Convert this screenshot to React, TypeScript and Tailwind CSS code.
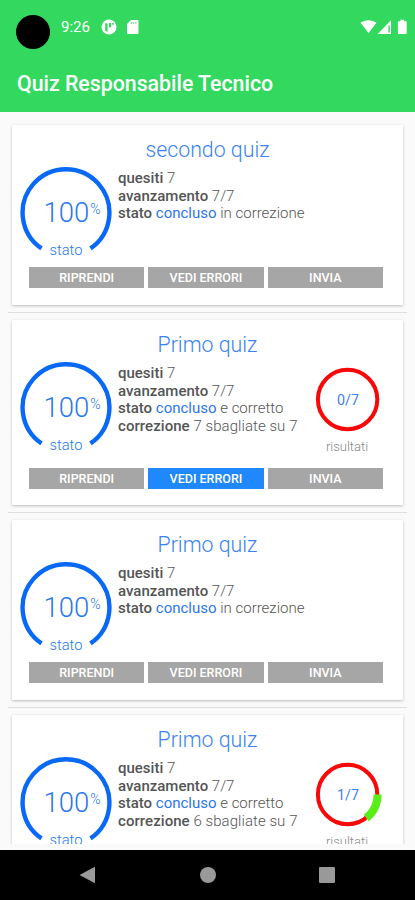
import React from "react";

type Quiz = {
  title: string;
  status: string;
  wrong?: number;
  right?: number;
};

const quizzes: Quiz[] = [
  { title: "secondo quiz", status: "in correzione" },
  { title: "Primo quiz", status: "e corretto", wrong: 7, right: 0 },
  { title: "Primo quiz", status: "in correzione" },
  { title: "Primo quiz", status: "e corretto", wrong: 6, right: 1 },
];

function StatusBar() {
  return (
    <div className="flex h-[56px] items-start pl-4 pr-[7px] pt-[15px] text-white">
      <div className="h-[34px] w-[34px] rounded-full bg-black" />
      <span className="ml-[11px] mt-[2px] text-[15px] leading-[20px]">9:26</span>
      <svg className="ml-[11px] mt-[4px]" width="16" height="16" viewBox="0 0 16 16">
        <circle cx="8" cy="8" r="7.5" fill="#fff" />
        <path d="M4.200 4.200v7.200l2.400 1.600V4.200zM8 4h2.200v4.200H8zM11.200 4h1.600v1.800h-1.600z" fill="#33d95f" />
      </svg>
      <svg className="ml-[9px] mt-[4px]" width="13" height="16" viewBox="0 0 13 16">
        <path d="M5 1h6.200c.8 0 1.300.5 1.300 1.300v11.400c0 .8-.5 1.300-1.300 1.300H2.300C1.500 15 1 14.500 1 13.700V5z" fill="#fff" />
        <path d="M5.400 3v1.800M7.600 3v1.800M9.800 3v1.800" stroke="#33d95f" strokeWidth=".8" />
      </svg>
      <div className="ml-auto mt-[4px] flex">
        <svg width="17" height="16" viewBox="0 0 17 16">
          <path d="M.5 3.800C5 .3 12 .3 16.500 3.800L8.500 14z" fill="#fff" />
        </svg>
        <svg width="15" height="16" viewBox="0 0 15 16">
          <path d="M14 1.200V15H.6zM11.400 6.500v7h1.400v-7z" fill="#fff" fillRule="evenodd" />
        </svg>
        <svg className="ml-[5px]" width="11" height="16" viewBox="0 0 11 16">
          <path d="M3.500.8h3.600v1.500h1.600c.6 0 1 .4 1 1v10.600c0 .6-.4 1-1 1H1.900c-.6 0-1-.4-1-1V3.300c0-.6.4-1 1-1h1.600z" fill="#fff" />
        </svg>
      </div>
    </div>
  );
}

function Gauge() {
  return (
    <svg className="shrink-0" width="92" height="96" viewBox="0 0 92 96">
      <path d="M21.500 83.400A43.400 43.400 0 1 1 70.500 83.400" fill="none" stroke="#0869f6" strokeWidth="4.400" />
      <text x="23.500" y="56.700" fontSize="27.500" fontWeight="300" fill="#2877ee">100</text>
      <text x="70.300" y="48.500" fontSize="14" fontWeight="300" fill="#2877ee">%</text>
      <text x="46" y="89.700" fontSize="14.700" fontWeight="300" textAnchor="middle" fill="#2877ee">stato</text>
    </svg>
  );
}

function Result({ right }: { right: number }) {
  return (
    <div className="ml-auto mr-[21px] flex w-[70px] flex-col items-center pt-[6px]">
      <svg width="70" height="66" viewBox="0 0 70 66">
        <circle cx="35.600" cy="33.500" r="29.700" fill="none" stroke="#f80808" strokeWidth="4" />
        {right > 0 && (
          <path d="M65.600 33.500A30 30 0 0 1 54.300 57" fill="none" stroke="#5aee18" strokeWidth="8" />
        )}
        <text x="36" y="38.500" fontSize="14.300" textAnchor="middle" fill="#3d82ee">{right}/7</text>
      </svg>
      <span className="mt-[6px] text-[13px] font-light leading-[18px] text-[#888]">risultati</span>
    </div>
  );
}

function QuizCard({ quiz }: { quiz: Quiz }) {
  const corrected = quiz.wrong !== undefined;
  return (
    <div
      className={`mx-3 shrink-0 rounded-[1px] bg-white shadow-[0_1px_3px_rgba(0,0,0,0.25)] ${
        corrected ? "h-[185px]" : "h-[180px]"
      }`}
    >
      <h2 className="pt-[9px] text-center text-[21.300px] font-light leading-[31px] text-[#3b82f0]">
        {quiz.title}
      </h2>
      <div className={`flex pl-2 ${corrected ? "h-[107.500px]" : "h-[101.500px]"}`}>
        <Gauge />
        <div className="ml-[6px] mt-[5px] whitespace-nowrap text-[15px] font-light leading-[17.700px] text-[#555]">
          <p><b className="font-medium">quesiti</b> 7</p>
          <p><b className="font-medium">avanzamento</b> 7/7</p>
          <p>
            <b className="font-medium">stato</b>{" "}
            <span className="font-normal text-[#2877ee]">concluso</span> {quiz.status}
          </p>
          {corrected && (
            <p className="tracking-[0.06px]">
              <b className="font-medium">correzione</b> {quiz.wrong} sbagliate su 7
            </p>
          )}
        </div>
        {corrected && <Result right={quiz.right ?? 0} />}
      </div>
      <div className="ml-[17px] mr-[20px] grid grid-cols-3 gap-[4px] text-center text-[12.500px] font-medium leading-[21px] text-white">
        <div className="bg-[#a6a6a6]">RIPRENDI</div>
        <div className={corrected ? "bg-[#1e88fc]" : "bg-[#a6a6a6]"}>VEDI ERRORI</div>
        <div className="bg-[#a6a6a6]">INVIA</div>
      </div>
    </div>
  );
}

function App() {
  return (
    <div className="flex h-[900px] w-[415px] flex-col overflow-hidden bg-[#fafafa] font-['Roboto',sans-serif]">
      <header className="h-[112px] shrink-0 bg-[#33d95f]">
        <StatusBar />
        <h1 className="pl-[17px] pt-[14px] text-[21.300px] font-medium leading-[28px] text-white">
          Quiz Responsabile Tecnico
        </h1>
      </header>
      <main className="flex h-[732px] shrink-0 flex-col overflow-hidden pt-[13px]">
        {quizzes.map((quiz, i) => (
          <React.Fragment key={i}>
            {i > 0 && <div className="mx-2 my-[7px] h-px shrink-0 bg-[#dedede]" />}
            <QuizCard quiz={quiz} />
          </React.Fragment>
        ))}
      </main>
      <nav className="mt-[6px] flex h-[50px] shrink-0 items-center bg-black">
        <svg className="ml-[79px]" width="17" height="18" viewBox="0 0 17 18">
          <path d="M.5 9L16 .8v16.400z" fill="#999" />
        </svg>
        <div className="ml-[104px] h-4 w-4 rounded-full bg-[#999]" />
        <div className="ml-[103px] h-4 w-4 rounded-[1px] bg-[#999]" />
      </nav>
    </div>
  );
}

export default App;
